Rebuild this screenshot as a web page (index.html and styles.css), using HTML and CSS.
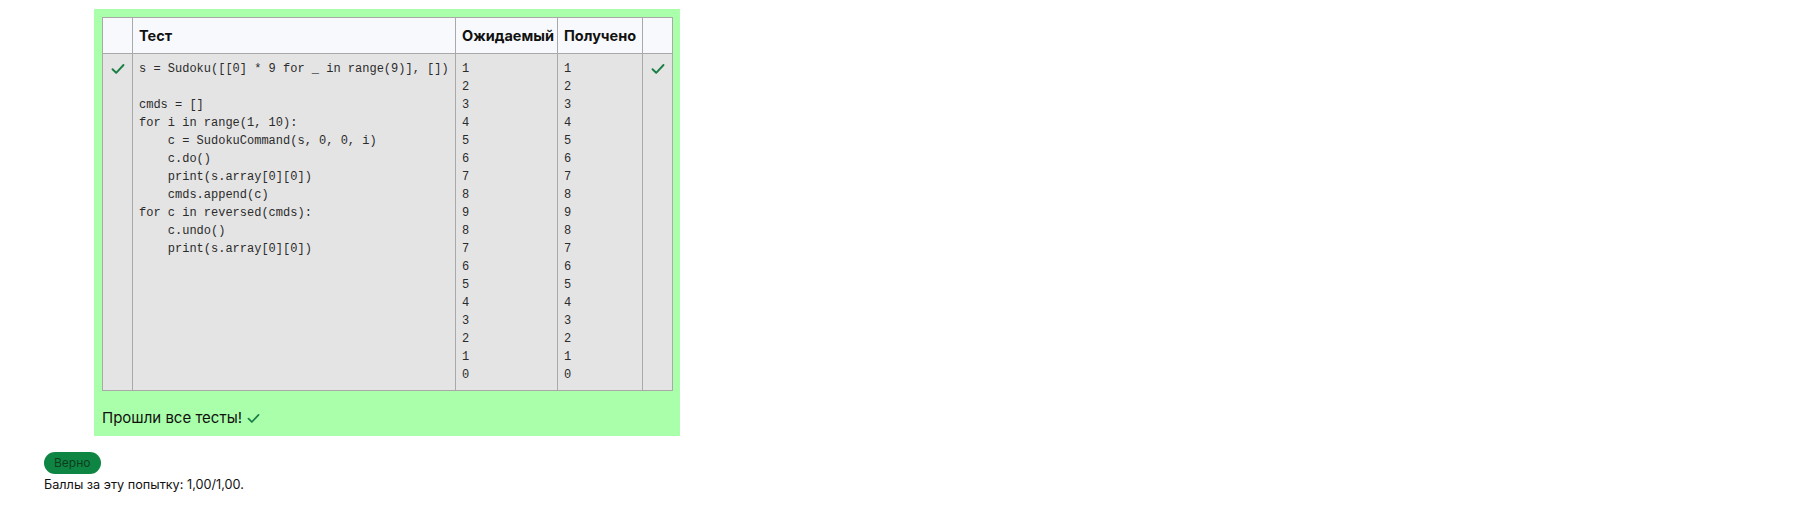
FILE: index.html
```html
<!DOCTYPE html>
<html lang="ru">
<head>
<meta charset="utf-8">
<link rel="stylesheet" href="styles.css">
</head>
<body>
<div class="page">
  <div class="results">
    <table class="coderunner">
      <colgroup>
        <col class="w-mark">
        <col class="w-test">
        <col class="w-exp">
        <col class="w-got">
        <col class="w-mark">
      </colgroup>
      <thead>
        <tr>
          <th class="c-mark"></th>
          <th>Тест</th>
          <th>Ожидаемый</th>
          <th>Получено</th>
          <th class="c-mark"></th>
        </tr>
      </thead>
      <tbody>
        <tr>
          <td class="c-mark"><svg class="tick" viewBox="0 0 14 12" width="14" height="12"><path d="M1.5 6.2 L5.2 9.8 L12.5 2" fill="none" stroke="#1a7f45" stroke-width="1.9" stroke-linecap="round" stroke-linejoin="round"/></svg></td>
          <td><pre>s = Sudoku([[0] * 9 for _ in range(9)], [])

cmds = []
for i in range(1, 10):
    c = SudokuCommand(s, 0, 0, i)
    c.do()
    print(s.array[0][0])
    cmds.append(c)
for c in reversed(cmds):
    c.undo()
    print(s.array[0][0])</pre></td>
          <td><pre>1
2
3
4
5
6
7
8
9
8
7
6
5
4
3
2
1
0</pre></td>
          <td><pre>1
2
3
4
5
6
7
8
9
8
7
6
5
4
3
2
1
0</pre></td>
          <td class="c-mark"><svg class="tick" viewBox="0 0 14 12" width="14" height="12"><path d="M1.5 6.2 L5.2 9.8 L12.5 2" fill="none" stroke="#1a7f45" stroke-width="1.9" stroke-linecap="round" stroke-linejoin="round"/></svg></td>
        </tr>
      </tbody>
    </table>
    <p class="passed">Прошли все тесты! <svg class="tick-small" viewBox="0 0 14 12" width="13" height="11"><path d="M1.5 6.2 L5.2 9.8 L12.5 2" fill="none" stroke="#1a7f45" stroke-width="1.9" stroke-linecap="round" stroke-linejoin="round"/></svg></p>
  </div>
  <div class="outcome">
    <span class="badge">Верно</span>
    <div class="grade">Баллы за эту попытку: 1,00/1,00.</div>
  </div>
</div>
</body>
</html>
```

FILE: styles.css
```css
html, body {
  margin: 0;
  padding: 0;
  background: #ffffff;
}
body {
  font-family: Inter, "Noto Sans", sans-serif;
  color: #1d2125;
}
.page {
  padding: 9px 0 0 44px;
}
.results {
  margin-left: 50px;
  width: 586px;
  background: #aaffaa;
  padding: 8px 8px 0 8px;
  box-sizing: border-box;
}
.coderunner {
  border-collapse: collapse;
  width: 570px;
  table-layout: fixed;
}
.w-mark { width: 30px; }
.w-test { width: 323px; }
.w-exp { width: 102px; }
.w-got { width: 85px; }
.coderunner th,
.coderunner td {
  border: 1px solid #a9a9a9;
  text-align: left;
  vertical-align: top;
}
.coderunner th {
  background: #f8f9fc;
  height: 35px;
  padding: 0 6px;
  font-size: 14.5px;
  font-weight: 700;
  color: #111;
  vertical-align: middle;
  white-space: nowrap;
}
.coderunner td {
  background: #e4e4e4;
  padding: 6px 6px 6px 6px;
}
th.c-mark, td.c-mark { padding: 0; text-align: center; }
td.c-mark { padding-top: 9px; }
.tick { display: block; margin: 0 auto; }
pre {
  margin: 0;
  font-family: "Liberation Mono", monospace;
  font-size: 12px;
  line-height: 18px;
  color: #2b2b2b;
}
.passed {
  margin: 0;
  height: 45px;
  box-sizing: border-box;
  padding-top: 8px;
  display: flex;
  align-items: center;
  gap: 5px;
  font-size: 15px;
  color: #111;
}
.tick-small { margin-top: 2px; }
.outcome {
  padding-top: 15px;
}
.badge {
  display: inline-block;
  background: #0f8543;
  color: #0b3d1e;
  font-size: 12px;
  line-height: 22px;
  height: 22px;
  padding: 0 10px;
  border-radius: 11px;
}
.grade {
  font-size: 12.7px;
  margin-top: 3px;
  color: #111;
}
```
